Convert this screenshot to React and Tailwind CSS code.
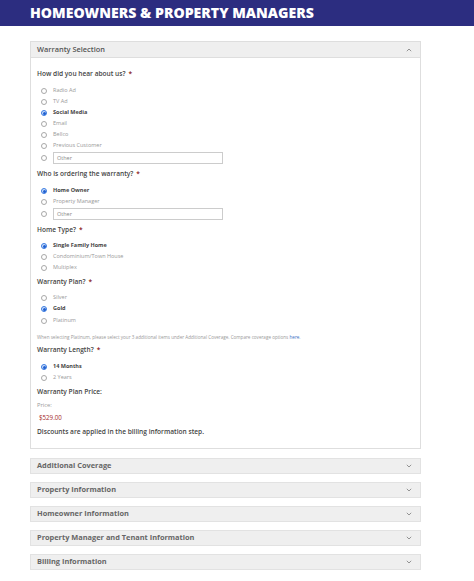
import React from "react";

const font = { fontFamily: '"Open Sans", "Liberation Sans", sans-serif' };

function Radio({ checked, label, mt = "" }) {
  return (
    <div className={`flex items-center h-[11px] ${mt}`}>
      <span className="w-[12px] flex justify-center ml-[1px]">
        {checked ? (
          <span className="w-[6px] h-[6px] rounded-full bg-[#cfe0fb] border border-[#3a7be0] flex items-center justify-center">
            <span className="w-[3px] h-[3px] rounded-full bg-[#1f5fd0]" />
          </span>
        ) : (
          <span className="w-[6px] h-[6px] rounded-full border border-[#a8a8a8] bg-white" />
        )}
      </span>
      <span
        className={`ml-[3px] text-[5.5px] leading-none ${
          checked ? "font-bold text-[#444]" : "text-[#999]"
        }`}
      >
        {label}
      </span>
    </div>
  );
}

function OtherRow({ mt = "" }) {
  return (
    <div className={`flex items-center h-[12px] ${mt}`}>
      <span className="w-[12px] flex justify-center ml-[1px]">
        <span className="w-[6px] h-[6px] rounded-full border border-[#a8a8a8] bg-white" />
      </span>
      <div className="ml-[3px] w-[170px] h-[12px] border border-[#ccc] bg-white flex items-center px-[3px] text-[5.5px] not-italic text-[#888]">
        Other
      </div>
    </div>
  );
}

function Label({ children, mt = "" }) {
  return (
    <div className={`h-[10px] flex items-center text-[6.6px] font-semibold text-[#444] ${mt}`}>
      {children}
      <span className="ml-[3px] text-[#8b1c1c]">*</span>
    </div>
  );
}

function Chevron({ up }) {
  return (
    <svg width="6" height="4" viewBox="0 0 6 4" className="mr-[8px]">
      <polyline
        points={up ? "0.8,3.2 3,1 5.2,3.2" : "0.8,0.8 3,3 5.2,0.8"}
        fill="none"
        stroke="#888"
        strokeWidth="0.9"
      />
    </svg>
  );
}

function Section({ title, mt }) {
  return (
    <div
      className={`h-[16px] bg-[#efefef] border border-[#e2e2e2] flex items-center justify-between ${mt}`}
    >
      <span className="ml-[6px] text-[7.4px] font-bold text-[#666]">{title}</span>
      <Chevron />
    </div>
  );
}

export default function App() {
  return (
    <div className="w-[474px] h-[581px] bg-white overflow-hidden" style={font}>
      <div className="h-[26px] bg-[#2c2d80] flex items-center pl-[30px]">
        <h1 className="text-[14.1px] font-extrabold text-white leading-none">
          HOMEOWNERS &amp; PROPERTY MANAGERS
        </h1>
      </div>

      <div className="ml-[30px] w-[391px] mt-[15px]">
        <div className="border border-[#dedede]">
          <div className="h-[16px] bg-[#efefef] border-b border-[#dedede] flex items-center justify-between">
            <span className="ml-[6px] text-[7.4px] font-semibold text-[#555]">
              Warranty Selection
            </span>
            <Chevron up />
          </div>
          <div className="pl-[6px] pt-[11px] pb-[11px] flex flex-col">
            <Label>How did you hear about us?</Label>
            <Radio label="Radio Ad" mt="mt-[6.5px]" />
            <Radio label="TV Ad" />
            <Radio checked label="Social Media" />
            <Radio label="Email" />
            <Radio label="Bellco" />
            <Radio label="Previous Customer" />
            <OtherRow mt="mt-[0.5px]" />

            <Label mt="mt-[5px]">Who is ordering the warranty?</Label>
            <Radio checked label="Home Owner" mt="mt-[6.5px]" />
            <Radio label="Property Manager" />
            <OtherRow mt="mt-[0.5px]" />

            <Label mt="mt-[5px]">Home Type?</Label>
            <Radio checked label="Single Family Home" mt="mt-[5.5px]" />
            <Radio label="Condominium/Town House" />
            <Radio label="Multiplex" />

            <Label mt="mt-[3.5px]">Warranty Plan?</Label>
            <Radio label="Silver" mt="mt-[5.5px]" />
            <Radio checked label="Gold" />
            <Radio label="Platinum" mt="mt-[1px]" />

            <div className="h-[8px] flex items-center mt-[6.5px] text-[4.6px] text-[#999]">
              When selecting Platinum, please select your 3 additional items under Additional
              Coverage. Compare coverage options&nbsp;
              <span className="text-[#3a6fc4]">here</span>.
            </div>

            <Label mt="mt-[4px]">Warranty Length?</Label>
            <Radio checked label="14 Months" mt="mt-[6.5px]" />
            <Radio label="2 Years" />

            <div className="h-[10px] flex items-center mt-[3.5px] text-[6.6px] font-semibold text-[#444]">
              Warranty Plan Price:
            </div>
            <div className="h-[10px] flex items-center mt-[3px] text-[5.8px] text-[#999]">
              Price:
            </div>
            <div className="h-[10px] flex items-center mt-[3px] ml-[2px] text-[6.2px] text-[#a52a2a]">
              $529.00
            </div>
            <div className="h-[10px] flex items-center mt-[4px] text-[6.6px] font-semibold text-[#444]">
              Discounts are applied in the billing information step.
            </div>
          </div>
        </div>

        <Section title="Additional Coverage" mt="mt-[8.5px]" />
        <Section title="Property Information" mt="mt-[8px]" />
        <Section title="Homeowner Information" mt="mt-[8px]" />
        <Section title="Property Manager and Tenant Information" mt="mt-[8px]" />
        <Section title="Billing Information" mt="mt-[8px]" />
      </div>
    </div>
  );
}
